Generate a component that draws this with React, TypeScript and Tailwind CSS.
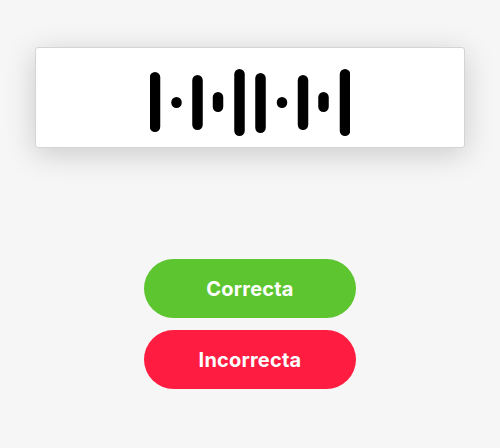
import React from 'react';

const BARS: { x: number; y1: number; y2: number }[] = [
  { x: 5, y1: 3, y2: 63 },
  { x: 26.5, y1: 28, y2: 39 },
  { x: 47.5, y1: 6, y2: 61 },
  { x: 68, y1: 23, y2: 43 },
  { x: 89.5, y1: 0, y2: 67 },
  { x: 110.5, y1: 4, y2: 64 },
  { x: 132, y1: 28, y2: 39 },
  { x: 153, y1: 6, y2: 61 },
  { x: 173.5, y1: 23, y2: 43 },
  { x: 195, y1: 0, y2: 67 },
];

function Waveform() {
  return (
    <svg width="200" height="67" viewBox="0 0 200 67" className="mt-[21px]">
      {BARS.map((b, i) => (
        <line
          key={i}
          x1={b.x}
          x2={b.x}
          y1={b.y1 + 5.25}
          y2={b.y2 - 5.25}
          stroke="#000"
          strokeWidth="10.5"
          strokeLinecap="round"
        />
      ))}
    </svg>
  );
}

export default function App() {
  return (
    <div
      className="w-[500px] h-[448px] bg-[#f6f6f6] flex flex-col items-center"
      style={{ fontFamily: 'Inter, "Noto Sans", sans-serif' }}
    >
      <div className="mt-[47px] w-[430px] h-[101px] bg-white border border-[#d4d4d4] rounded-[3px] shadow-[0_6px_30px_rgba(0,0,0,0.18)] flex justify-center items-start">
        <Waveform />
      </div>

      <div className="mt-[111px] flex flex-col gap-[12px]">
        <button className="w-[212px] h-[59px] rounded-full bg-[#5cc52f] text-white text-[20px] font-bold tracking-[0.2px]">
          Correcta
        </button>
        <button className="w-[212px] h-[59px] rounded-full bg-[#fe1c40] text-white text-[20px] font-bold tracking-[0.2px]">
          Incorrecta
        </button>
      </div>
    </div>
  );
}
